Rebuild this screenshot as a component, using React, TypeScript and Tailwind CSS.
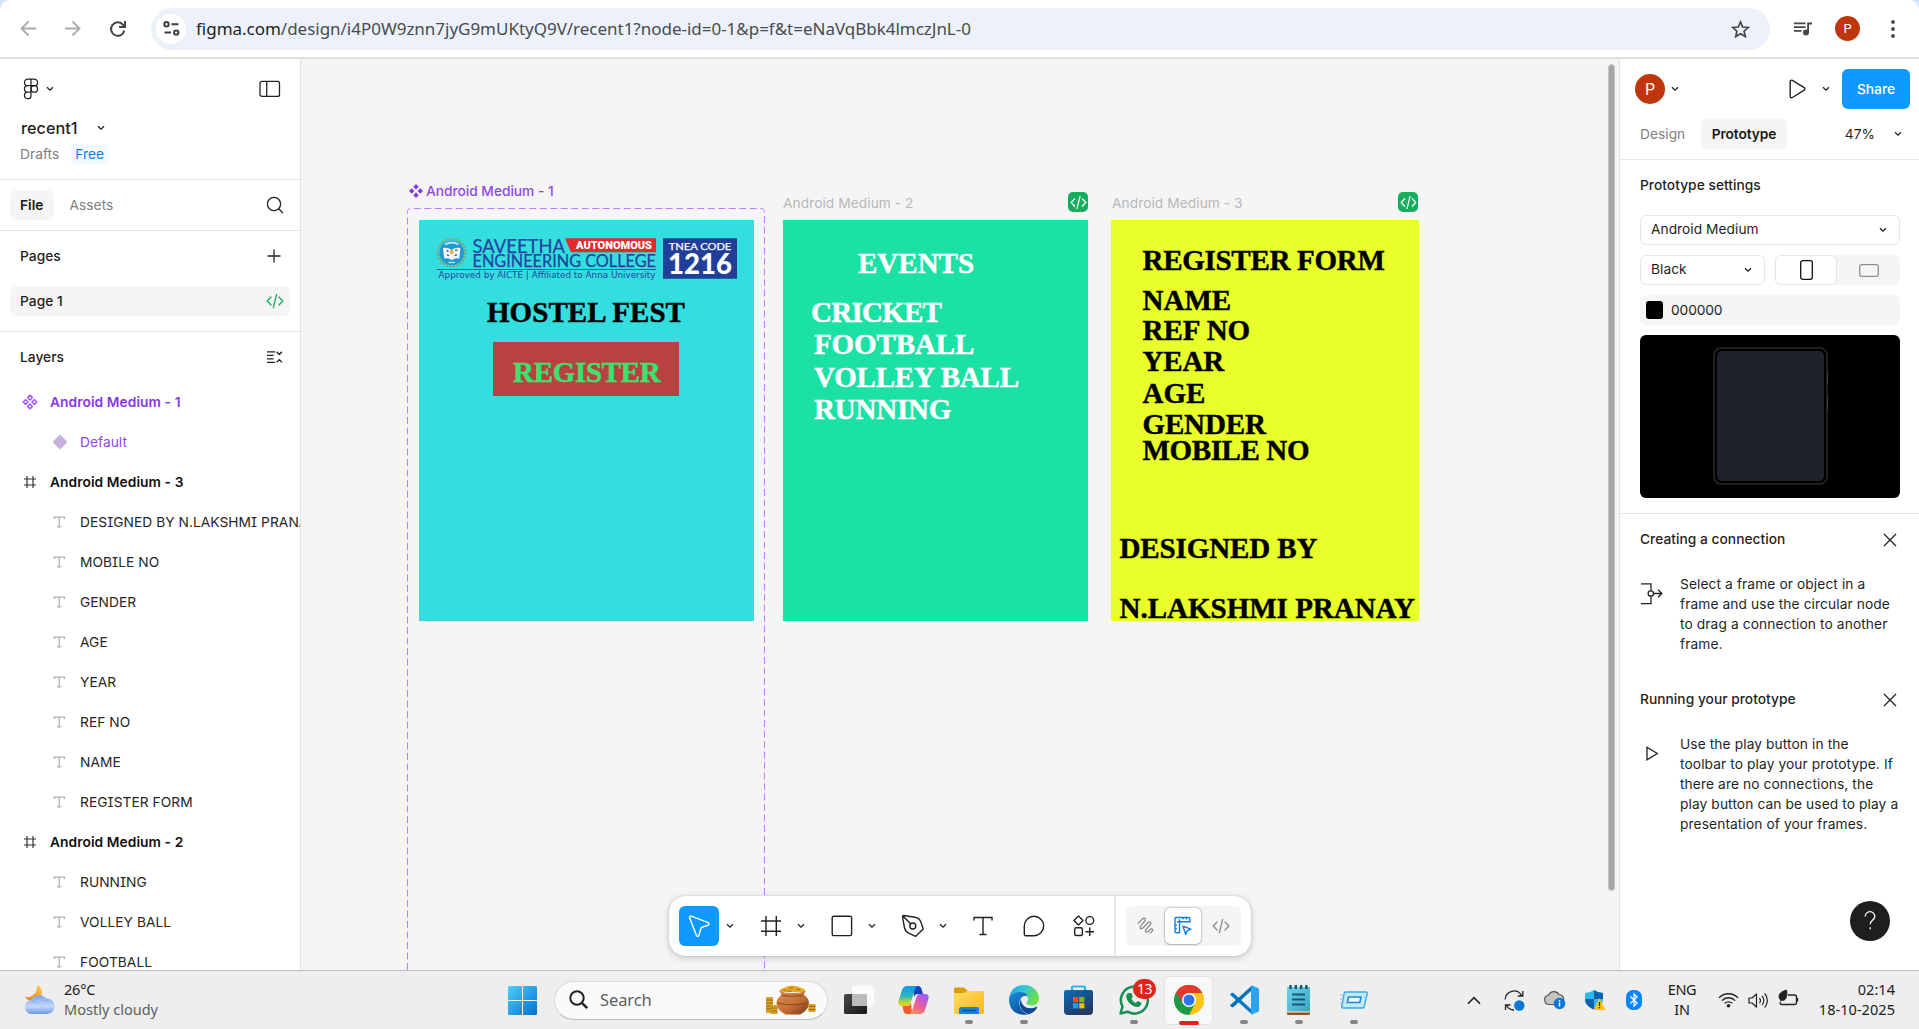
import React from "react";

type SvgProps = React.SVGProps<SVGSVGElement>;

function Chevron({ className = "" }: { className?: string }) {
  return (
    <svg className={`shrink-0 ${className}`} width="8" height="6" viewBox="0 0 8 6" fill="none" stroke="currentColor" strokeWidth="1.3">
      <path d="M1 1.2 4 4.2 7 1.2" />
    </svg>
  );
}

function CodeGlyph(props: SvgProps) {
  return (
    <svg viewBox="0 0 18 16" fill="none" stroke="currentColor" strokeWidth="1.3" strokeLinecap="round" strokeLinejoin="round" {...props}>
      <path d="M5 4 1.2 8 5 12M13 4l3.8 4L13 12M10.6 1.5 7.4 14.5" />
    </svg>
  );
}

/* ---------- browser bar ---------- */

function BrowserBar() {
  return (
    <div className="h-[59px] shrink-0 bg-[#d3e3fd]">
      <div className="flex h-full items-center rounded-t-[10px] border-b-2 border-[#e0e1e1] bg-white">
        <div className="flex w-[151px] shrink-0 items-center pl-5 text-[#a9abad]">
          <svg width="17" height="17" viewBox="0 0 17 17" fill="none" stroke="currentColor" strokeWidth="1.8">
            <path d="M16 8.5H2M8.5 1.5l-7 7 7 7" />
          </svg>
          <svg className="ml-[27px]" width="17" height="17" viewBox="0 0 17 17" fill="none" stroke="currentColor" strokeWidth="1.8">
            <path d="M1 8.500H15M8.500 1.500l7 7-7 7" />
          </svg>
          <svg className="ml-[28px] text-[#444746]" width="18" height="18" viewBox="0 0 18 18" fill="none" stroke="currentColor" strokeWidth="2">
            <path d="M15.300 10.500a6.700 6.700 0 1 1-1.600-6L16 6.700" />
            <path d="M16 1v6h-6" />
          </svg>
        </div>
        <div className="flex h-[42px] w-[1619px] shrink-0 items-center rounded-full bg-[#edf1fa] pl-[5px]">
          <div className="flex h-[30px] w-[30px] items-center justify-center rounded-full bg-white">
            <svg width="17" height="15" viewBox="0 0 17 15" fill="none" stroke="#3c4043" strokeWidth="2">
              <circle cx="3.500" cy="3.200" r="2.200" />
              <path d="M8.500 3.200H15.500M1.500 11.600H8" />
              <circle cx="13.200" cy="11.600" r="2.200" />
            </svg>
          </div>
          <div className="ml-[10px] flex-1 whitespace-nowrap pt-px font-['Noto_Sans',sans-serif] text-[17px] leading-[22px] tracking-[-0.02px] text-[#474b50]">
            <span className="text-[#1f2023]">figma.com</span>/design/i4P0W9znn7jyG9mUKtyQ9V/recent1?node-id=0-1&amp;p=f&amp;t=eNaVqBbk4lmczJnL-0
          </div>
          <svg className="mr-5" width="19" height="18" viewBox="0 0 19 18" fill="none" stroke="#444746" strokeWidth="1.7">
            <path d="m9.500 1.900 2.250 5.100 5.500.5-4.150 3.700 1.200 5.400-4.800-2.850-4.800 2.850 1.200-5.400L1.750 7.500l5.500-.5z" />
          </svg>
        </div>
        <div className="flex items-center pl-[23px]">
          <svg width="20" height="16" viewBox="0 0 20 16" fill="#444746">
            <path d="M1 1.500h11.500v1.700H1zM1 5.300h11.500V7H1zM1 9.100h7.500v1.700H1zM14.200 1.500H19v2.100h-3v8h-1.800z" />
            <circle cx="13" cy="11.600" r="3" />
          </svg>
          <div className="ml-[22px] flex h-[25px] w-[25px] items-center justify-center rounded-full bg-[#bf360c] font-[Roboto,sans-serif] text-[13px] text-white">P</div>
          <svg className="ml-[31px]" width="4" height="18" viewBox="0 0 4 18" fill="#444746">
            <circle cx="2" cy="2" r="1.900" /><circle cx="2" cy="9" r="1.900" /><circle cx="2" cy="16" r="1.900" />
          </svg>
        </div>
      </div>
    </div>
  );
}

/* ---------- left sidebar ---------- */

function TextIcon() {
  return (
    <svg className="shrink-0" width="13" height="12" viewBox="0 0 13 12" fill="none" stroke="#b0b0b0" strokeWidth="1.200">
      <path d="M1.100 3V1.100h10.300V3M6.250 1.100v9.800M4.100 10.900h4.300" />
    </svg>
  );
}

function HashIcon() {
  return (
    <svg width="14" height="14" viewBox="0 0 14 14" fill="none" stroke="#333" strokeWidth="1.200">
      <path d="M4 1v12M10 1v12M1 4h12M1 10h12" />
    </svg>
  );
}

const layers: { kind: "set" | "variant" | "frame" | "text"; name: string }[] = [
  { kind: "set", name: "Android Medium - 1" },
  { kind: "variant", name: "Default" },
  { kind: "frame", name: "Android Medium - 3" },
  { kind: "text", name: "DESIGNED BY N.LAKSHMI PRANAY" },
  { kind: "text", name: "MOBILE NO" },
  { kind: "text", name: "GENDER" },
  { kind: "text", name: "AGE" },
  { kind: "text", name: "YEAR" },
  { kind: "text", name: "REF NO" },
  { kind: "text", name: "NAME" },
  { kind: "text", name: "REGISTER FORM" },
  { kind: "frame", name: "Android Medium - 2" },
  { kind: "text", name: "RUNNING" },
  { kind: "text", name: "VOLLEY BALL" },
  { kind: "text", name: "FOOTBALL" },
];

function LayerRow({ kind, name }: { kind: string; name: string }) {
  if (kind === "set")
    return (
      <div className="flex h-10 shrink-0 items-center pl-[22px] font-semibold tracking-[0.08px] text-[#8638e5]">
        <svg width="16" height="16" viewBox="0 0 16 16" fill="none" stroke="#9747ff" strokeWidth="1.300">
          <path d="M8 1.200 10.400 3.600 8 6 5.600 3.600zM8 10l2.400 2.400L8 14.800l-2.400-2.400zM3.600 5.600 6 8l-2.400 2.400L1.200 8zM12.400 5.600 14.800 8l-2.400 2.400L10 8z" />
        </svg>
        <span className="ml-3">{name}</span>
      </div>
    );
  if (kind === "variant")
    return (
      <div className="flex h-10 shrink-0 items-center pl-[52px] text-[#8f47e8]">
        <svg width="16" height="16" viewBox="0 0 16 16">
          <path d="M8 1 15 8 8 15 1 8z" fill="#c5b0df" stroke="#c5b0df" strokeLinejoin="round" />
        </svg>
        <span className="ml-3">{name}</span>
      </div>
    );
  if (kind === "frame")
    return (
      <div className="flex h-10 shrink-0 items-center pl-[23px] font-semibold tracking-[0.08px] text-[#111]">
        <HashIcon />
        <span className="ml-[13px]">{name}</span>
      </div>
    );
  return (
    <div className="flex h-10 shrink-0 items-center whitespace-nowrap pl-[53px] text-[#262626]">
      <TextIcon />
      <span className="ml-[14px] tracking-[0.05px] [font-feature-settings:'cv08']">{name}</span>
    </div>
  );
}

function LeftPanel() {
  return (
    <aside className="flex w-[301px] shrink-0 flex-col overflow-hidden border-r border-[#e2e2e2] bg-white text-[13.750px] tracking-[0.03px] text-[#1f1f1f]">
      <div className="h-[121px] shrink-0 border-b border-[#e6e6e6]">
        <div className="flex items-center pl-[23px] pr-[19px] pt-[19px]">
          <svg width="16" height="22" viewBox="0 0 16 22" fill="none" stroke="#222" strokeWidth="1.250">
            <path d="M8 1.200H4.700a3.250 3.250 0 0 0 0 6.500H8zM8 1.200h3.300a3.250 3.250 0 0 1 0 6.500H8zM8 7.700H4.700a3.250 3.250 0 0 0 0 6.500H8zM8 14.200H4.700A3.250 3.250 0 1 0 8 17.400z" />
            <circle cx="11.300" cy="10.950" r="3.250" />
          </svg>
          <Chevron className="ml-[7px]" />
          <svg className="ml-auto" width="22" height="18" viewBox="0 0 22 18" fill="none" stroke="#222" strokeWidth="1.300">
            <rect x="1" y="1.400" width="19.500" height="15" rx="2" />
            <path d="M7.700 1.400v15" />
          </svg>
        </div>
        <div className="mt-[17px] flex h-[22px] items-center pl-[21px] text-[16.250px] font-medium tracking-[0.02px]">
          recent1
          <Chevron className="ml-[19px]" />
        </div>
        <div className="mt-[5px] flex h-5 items-center pl-5 text-[#808080]">
          Drafts
          <span className="ml-[11px] flex h-5 items-center rounded-[5px] bg-[#f2f9ff] px-[5px] text-[#0b7fe6]">Free</span>
        </div>
      </div>
      <div className="flex h-[51px] shrink-0 items-center border-b border-[#e6e6e6] pl-[10px] pr-4 text-[#808080]">
        <span className="flex h-[30px] items-center rounded-[6px] bg-[#f5f5f5] px-[10px] font-semibold text-[#1a1a1a]">File</span>
        <span className="ml-4">Assets</span>
        <svg className="ml-auto" width="18" height="18" viewBox="0 0 18 18" fill="none" stroke="#222" strokeWidth="1.300">
          <circle cx="8" cy="8" r="6.600" />
          <path d="m12.700 12.700 4.300 4.300" />
        </svg>
      </div>
      <div className="h-[101px] shrink-0 border-b border-[#e6e6e6]">
        <div className="flex h-[55px] items-center pb-[5px] pl-5 pr-[19px] font-medium">
          Pages
          <svg className="ml-auto" width="14" height="14" viewBox="0 0 14 14" stroke="#222" strokeWidth="1.300">
            <path d="M7 .5v13M.5 7h13" />
          </svg>
        </div>
        <div className="mx-[10px] flex h-[30px] items-center rounded-[6px] bg-[#f5f5f5] pl-[10px] pr-[6px] font-medium">
          Page 1
          <CodeGlyph className="ml-auto text-[#14ae5c]" width="18" height="16" />
        </div>
      </div>
      <div className="flex h-[50px] shrink-0 items-center pl-5 pr-[17px] font-medium">
        Layers
        <svg className="ml-auto" width="17" height="14" viewBox="0 0 17 14" fill="none" stroke="#222" strokeWidth="1.300">
          <path d="M1 1.800h8M1 5.300h6.500M1 8.800h6.500M1 12.400h8M10.500 1.800 13.300 4.500 16 1.800M10.500 12.400l2.800-2.700 2.700 2.700" />
        </svg>
      </div>
      <div className="flex min-h-0 flex-1 flex-col overflow-hidden">
        {layers.map((l) => (
          <LayerRow key={l.name} kind={l.kind} name={l.name} />
        ))}
      </div>
    </aside>
  );
}

/* ---------- canvas ---------- */

function Item({ at, children }: { at: string; children: React.ReactNode }) {
  return (
    <div className={`absolute whitespace-nowrap font-['Liberation_Serif',serif] text-[29px] font-bold leading-[29px] [-webkit-text-stroke:0.45px_currentColor] ${at}`}>
      {children}
    </div>
  );
}

function ReadyBadge({ at }: { at: string }) {
  return (
    <div className={`absolute flex h-5 w-5 items-center justify-center rounded-[5px] bg-[#14ae5c] text-white ${at}`}>
      <CodeGlyph width="17" height="15" />
    </div>
  );
}

function CollegeLogo() {
  return (
    <svg className="absolute left-[17px] top-[17px]" width="303" height="46" viewBox="0 0 303 46">
      <circle cx="15.700" cy="15.700" r="13.600" fill="none" stroke="#7fa77d" strokeWidth="2.600" strokeDasharray="2.200 1.360" />
      <circle cx="15.700" cy="15.700" r="12.300" fill="#1e9bd7" />
      <path d="M9 7.500q6.700-4 13.400 0" stroke="#bfe6f7" strokeWidth="2" fill="none" />
      <path d="M7 11q5-1 8.700 2 3.700-3 8.700-2l-1.200 10.500q-4.500-.8-7.500 1.500-3-2.300-7.500-1.500z" fill="#f3f7f5" />
      <circle cx="15.700" cy="15" r="1.900" fill="#e9a33b" />
      <path d="M10.500 13.500l2 1M19 13.500l2.500-.5M11 18l2.200.5M18.500 18.500l2.500-.5" stroke="#5a60b0" strokeWidth="1.500" />
      <path d="M12.500 25.500h6.400" stroke="#bfe6f7" strokeWidth="1.300" />
      <g fontFamily="Lato, sans-serif" fill="#1f459f">
        <text x="36.500" y="15.700" fontSize="19.800" textLength="92.500" lengthAdjust="spacingAndGlyphs" stroke="#1f459f" strokeWidth=".25">SAVEETHA</text>
        <text x="36.500" y="29.900" fontSize="16.800" textLength="183.500" lengthAdjust="spacingAndGlyphs" stroke="#1f459f" strokeWidth=".25">ENGINEERING COLLEGE</text>
      </g>
      <path d="M1 32.500h219" stroke="#1f459f" />
      <text x="2.500" y="41.300" fontFamily="'DejaVu Sans', sans-serif" fontSize="8" fill="#1f459f" textLength="217" lengthAdjust="spacingAndGlyphs">Approved by AICTE | Affiliated to Anna University</text>
      <path d="M129 1.300h91v14h-85z" fill="#e32b2d" />
      <text x="140" y="12" fontFamily="Roboto, sans-serif" fontWeight="900" fontSize="10.800" fill="#fff" textLength="76" lengthAdjust="spacingAndGlyphs">AUTONOMOUS</text>
      <path d="M227 1.300h74v40.500h-74z" fill="#213f99" />
      <g fill="#fff" fontFamily="Lato, sans-serif">
        <text x="232.800" y="12.500" fontSize="10" textLength="62.500" lengthAdjust="spacingAndGlyphs" stroke="#fff" strokeWidth=".25">TNEA CODE</text>
        <text x="232" y="37.200" fontSize="28.500" fontWeight="900" textLength="64" lengthAdjust="spacingAndGlyphs">1216</text>
      </g>
    </svg>
  );
}

function Toolbar() {
  return (
    <div className="absolute left-[368px] top-[837px] flex h-[60px] w-[582px] items-center rounded-[16px] bg-white pl-[10px] text-[#222] shadow-[0_0_1px_rgba(0,0,0,0.35),0_2px_7px_rgba(0,0,0,0.2)]">
      <div className="flex h-10 w-10 items-center justify-center rounded-[6px] bg-[#0d99ff]">
        <svg width="24" height="24" viewBox="0 0 24 24" fill="none" stroke="#fff" strokeWidth="1.400" strokeLinejoin="round">
          <path d="M2.600 3.700c-.4-1 .6-2 1.600-1.600l17 6.600c1.100.4 1.100 1.900.1 2.300l-6.500 2.300c-.3.100-.6.400-.7.700l-2.300 7.400c-.4 1.100-1.900 1.100-2.300.1z" />
        </svg>
      </div>
      <Chevron className="ml-[7px]" />
      <svg className="ml-[26px]" width="22" height="22" viewBox="0 0 22 22" fill="none" stroke="currentColor" strokeWidth="1.400">
        <path d="M6 1v20M16.300 1v20M1 6h20M1 16.300h20" />
      </svg>
      <Chevron className="ml-[15px]" />
      <svg className="ml-[26px]" width="22" height="22" viewBox="0 0 22 22" fill="none" stroke="currentColor" strokeWidth="1.400">
        <rect x="1.200" y="1.200" width="19.400" height="19.400" rx="1.500" />
      </svg>
      <Chevron className="ml-[15px]" />
      <svg className="ml-[25px]" width="24" height="24" viewBox="0 0 24 24" fill="none" stroke="currentColor" strokeWidth="1.400" strokeLinejoin="round">
        <path d="M1.500 2.800c0-.9.600-1.400 1.400-1.300L14 3.200c3.200.6 5 2.200 6 5l2.200 6.800-7.500 7.300-6.600-3c-2.600-1-3.900-2.800-4.600-5.500zM2 2l7.500 7.800" />
        <circle cx="11.800" cy="12" r="3" />
      </svg>
      <Chevron className="ml-[14px]" />
      <svg className="ml-[26px]" width="20" height="20" viewBox="0 0 20 20" fill="none" stroke="currentColor" strokeWidth="1.400">
        <path d="M1 4.500V1.500h18v3M10 1.500v17M6.500 18.500h7" />
      </svg>
      <svg className="ml-[30px]" width="22" height="22" viewBox="0 0 22 22" fill="none" stroke="currentColor" strokeWidth="1.400">
        <path d="M1.300 19.200V11A9.700 9.700 0 1 1 11 20.700H2.800a1.500 1.500 0 0 1-1.500-1.500z" />
      </svg>
      <svg className="ml-[28px]" width="22" height="22" viewBox="0 0 22 22" fill="none" stroke="currentColor" strokeWidth="1.400" strokeLinejoin="round">
        <path d="M5.500 1 10 5.500 5.500 10 1 5.500zM16.800 12.500v8.500M12.500 16.800H21" />
        <circle cx="16.800" cy="5.500" r="3.900" />
        <rect x="1.700" y="12.800" width="7.700" height="7.700" rx="1.500" />
      </svg>
      <div className="ml-[19px] h-full w-[2px] bg-[#e6e6e6]" />
      <div className="ml-[10px] flex h-10 w-[115px] items-center rounded-[6px] bg-[#f5f5f5] text-[#8a8a8a]">
        <svg className="ml-[11px]" width="18" height="18" viewBox="0 0 17 17" fill="none" stroke="currentColor" strokeWidth="1.200" strokeLinecap="round" strokeLinejoin="round">
          <path d="M1 6 5 2q2-1.500 2.800-.3.500 1-1 2.800L3.800 8.200q-1.500 2-.3 2.700 1 .6 2.500-1l4.300-4.500q1.700-1.500 2.600-.4.800 1-.8 2.800L8.700 11.400q-1.400 2-.3 2.600 1 .6 2.300-.6l1.300-1.300q1.600-1.500 2.500-.6.900.9-.4 2.200l-1.400 1.500" />
        </svg>
        <div className="ml-[10px] flex h-[36px] w-[36px] items-center justify-center rounded-[5px] bg-white shadow-[0_0_2px_rgba(0,0,0,0.5),0_1px_2px_rgba(0,0,0,0.15)]">
          <svg width="18" height="20" viewBox="0 0 18 20" fill="none" stroke="#0b7fe6" strokeWidth="1.400" strokeLinejoin="round">
            <path d="M2.200 1.500h12.600A1.200 1.200 0 0 1 16 2.700v3H5.500v11H2.200A1.200 1.200 0 0 1 1 15.500V2.700a1.200 1.200 0 0 1 1.200-1.200zM5.500 5.700H3M5.500 3.200v2.500M9 1.700v1.800M12.500 1.700v1.800M1.200 9h1.800M1.200 12.500h1.800M9 10.200l7.800 3-3.700 1.600-1.400 3.800z" />
          </svg>
        </div>
        <CodeGlyph className="ml-[11px]" width="18" height="18" />
      </div>
    </div>
  );
}

function Canvas() {
  return (
    <main className="relative h-full flex-1 overflow-hidden bg-[#f5f5f5]">
      <svg className="absolute left-[106px] top-[149px]" width="359" height="762" viewBox="0 0 359 762" fill="none">
        <path d="M.5 762V3.500q0-3 3-3h351q3 0 3 3v758.500" stroke="#b980fb" strokeWidth="1" strokeDasharray="7 3.500" />
      </svg>
      <div className="absolute left-[108px] top-[123px] flex items-center text-[13.750px] leading-[18px] text-[#9049e8]">
        <svg width="14" height="14" viewBox="0 0 14 14" fill="#8638e5">
          <path d="M7 0 9.700 2.700 7 5.400 4.300 2.700zM7 8.600l2.700 2.700L7 14l-2.700-2.700zM2.700 4.300 5.400 7 2.700 9.700 0 7zM11.300 4.300 14 7l-2.700 2.700L8.600 7z" />
        </svg>
        <span className="ml-[3px] font-medium tracking-[-0.02px]">Android Medium - 1</span>
      </div>
      <div className="absolute left-[482px] top-[135px] text-[13.750px] leading-[18px] tracking-[0.05px] text-[#b8b8b8]">Android Medium - 2</div>
      <div className="absolute left-[811px] top-[135px] text-[13.750px] leading-[18px] tracking-[0.05px] text-[#b8b8b8]">Android Medium - 3</div>
      <ReadyBadge at="left-[767px] top-[133px]" />
      <ReadyBadge at="left-[1097px] top-[133px]" />

      <div className="absolute left-[118px] top-[161px] h-[401px] w-[334.500px] bg-[#34dede] text-black">
        <CollegeLogo />
        <Item at="left-[68px] top-[78px] tracking-[0.05px]">HOSTEL FEST</Item>
        <div className="absolute left-[74px] top-[122px] h-[54px] w-[186px] bg-[#b94141]" />
        <Item at="left-[94px] top-[138px] tracking-[-0.3px] text-[#3be26d]">REGISTER</Item>
      </div>

      <div className="absolute left-[482px] top-[161px] h-[401px] w-[305px] bg-[#1be1a5] text-white">
        <Item at="left-[75px] top-[29px]">EVENTS</Item>
        <Item at="left-[28px] top-[78px] tracking-[-0.75px]">CRICKET</Item>
        <Item at="left-[31px] top-[110px] tracking-[-0.1px]">FOOTBALL</Item>
        <Item at="left-[31px] top-[143px] tracking-[-0.2px]">VOLLEY BALL</Item>
        <Item at="left-[31px] top-[175px] tracking-[-0.2px]">RUNNING</Item>
      </div>

      <div className="absolute left-[810px] top-[161px] h-[401px] w-[308px] bg-[#e9ff29] text-black">
        <Item at="left-[31.500px] top-[26px] tracking-[-0.28px]">REGISTER FORM</Item>
        <Item at="left-[31.500px] top-[66px]">NAME</Item>
        <Item at="left-[31.500px] top-[96px]">REF NO</Item>
        <Item at="left-[31.500px] top-[127px] tracking-[-0.2px]">YEAR</Item>
        <Item at="left-[31.500px] top-[159px]">AGE</Item>
        <Item at="left-[31.500px] top-[190px] tracking-[-0.15px]">GENDER</Item>
        <Item at="left-[31.500px] top-[216px] tracking-[-0.38px]">MOBILE NO</Item>
        <Item at="left-[8.500px] top-[314px] tracking-[-0.1px]">DESIGNED BY</Item>
        <Item at="left-[8.500px] top-[374px]">N.LAKSHMI PRANAY</Item>
      </div>

      <div className="absolute right-[4px] top-[5px] h-[827px] w-[7px] rounded-full border border-[#c4c4c4] bg-[#a6a6a6]" />
      <Toolbar />
    </main>
  );
}

/* ---------- right panel ---------- */

function CloseIcon() {
  return (
    <svg className="ml-auto" width="14" height="14" viewBox="0 0 14 14" stroke="#222" strokeWidth="1.300">
      <path d="M1 1l12 12M13 1 1 13" />
    </svg>
  );
}

function RightPanel() {
  return (
    <aside className="relative flex w-[300px] shrink-0 flex-col border-l border-[#e2e2e2] bg-white text-[13.750px] tracking-[0.03px] text-[#1f1f1f]">
      <div className="h-[101px] shrink-0 border-b border-[#e6e6e6]">
        <div className="flex items-center pl-[15px] pr-[9px] pt-[10px]">
          <div className="flex h-[30px] w-[30px] items-center justify-center rounded-full bg-[#bf360c] text-[16px] text-white">P</div>
          <Chevron className="ml-[6px]" />
          <svg className="ml-auto" width="17" height="20" viewBox="0 0 17 20" fill="none" stroke="#222" strokeWidth="1.400">
            <path d="M1.200 2.600c0-1.200 1.200-1.800 2.200-1.200l11.800 7.300c.9.600.9 1.900 0 2.500L3.400 18.500c-1 .6-2.200 0-2.200-1.200z" />
          </svg>
          <Chevron className="ml-[16px] mr-[12px]" />
          <div className="flex h-10 w-[68px] items-center justify-center rounded-[6px] bg-[#0d99ff] font-medium text-white">Share</div>
        </div>
        <div className="mt-[10px] flex h-[30px] items-center pl-5 pr-[17px] text-[#808080]">
          <span className="w-[46px]">Design</span>
          <span className="ml-[15px] flex h-[30px] w-[86px] items-center justify-center rounded-[6px] bg-[#f5f5f5] font-semibold tracking-[-0.1px] text-[#1a1a1a]">Prototype</span>
          <span className="ml-auto text-[#1f1f1f]">47%</span>
          <Chevron className="ml-[19px] text-[#222]" />
        </div>
      </div>
      <div className="flex h-[354px] shrink-0 flex-col border-b border-[#e6e6e6] pl-5 pr-[19px]">
        <div className="flex h-[55px] items-end pb-[20px] font-medium leading-[20px]">Prototype settings</div>
        <div className="flex h-[30px] items-center rounded-[6px] border border-[#e6e6e6] pb-px pl-[10px] pr-3">
          Android Medium
          <Chevron className="ml-auto" />
        </div>
        <div className="mt-[10px] flex gap-[10px]">
          <div className="flex h-[30px] w-[125px] items-center rounded-[6px] border border-[#e6e6e6] pb-px pl-[10px] pr-3">
            Black
            <Chevron className="ml-auto" />
          </div>
          <div className="flex h-[30px] w-[125px] rounded-[6px] bg-[#f5f5f5]">
            <div className="flex w-[62px] items-center justify-center rounded-[6px] border border-[#e6e6e6] bg-white">
              <svg width="13" height="20" viewBox="0 0 13 20" fill="none" stroke="#111" strokeWidth="1.300">
                <rect x=".7" y=".7" width="11.600" height="18.600" rx="2" />
              </svg>
            </div>
            <div className="flex flex-1 items-center justify-center">
              <svg width="20" height="13" viewBox="0 0 20 13" fill="none" stroke="#8f8f8f" strokeWidth="1.300">
                <rect x=".7" y=".7" width="18.600" height="11.600" rx="2" />
              </svg>
            </div>
          </div>
        </div>
        <div className="mt-[10px] flex h-[30px] items-center rounded-[6px] bg-[#f5f5f5] pl-[6px]">
          <div className="h-[18px] w-[17px] rounded-[3px] bg-black" />
          <span className="ml-2 tracking-[-0.1px]">000000</span>
        </div>
        <div className="mt-[10px] flex h-[163px] items-center justify-center rounded-[6px] bg-black">
          <div className="relative mb-px h-[138px] w-[115px] rounded-[8px] border-2 border-[#202020] bg-black p-[2px]">
            <div className="h-full w-full rounded-[5px] bg-[#1e2229]" />
            <div className="absolute -right-[2px] top-[22px] h-3 w-px bg-[#3a3a3a]" />
            <div className="absolute -right-[2px] top-[45px] h-[18px] w-px bg-[#3a3a3a]" />
          </div>
        </div>
      </div>
      <div className="flex h-[51px] shrink-0 items-center pl-5 pr-[22px] font-medium">
        Creating a connection
        <CloseIcon />
      </div>
      <div className="flex h-[109px] shrink-0 pl-5 pt-[9px]">
        <svg className="mt-[9px] shrink-0" width="24" height="22" viewBox="0 0 24 22" fill="none" stroke="#222" strokeWidth="1.300">
          <path d="M1 .8h10v7M11 13.200v7.500H1M13.600 10.500h8M18 6.700l3.900 3.800L18 14.300" />
          <circle cx="10.800" cy="10.500" r="2.700" />
        </svg>
        <p className="ml-4 whitespace-nowrap leading-[20px] tracking-[0.1px]">
          Select a frame or object in a<br />frame and use the circular node<br />to drag a connection to another<br />frame.
        </p>
      </div>
      <div className="flex h-[51px] shrink-0 items-center pl-5 pr-[22px] font-medium">
        Running your prototype
        <CloseIcon />
      </div>
      <div className="flex pl-[26px] pt-[9px]">
        <svg className="mt-[12px] shrink-0" width="13" height="15" viewBox="0 0 13 15" fill="none" stroke="#222" strokeWidth="1.300">
          <path d="M1 1.200 11.300 7.500 1 13.800z" />
        </svg>
        <p className="ml-[21px] whitespace-nowrap leading-[20px] tracking-[0.1px]">
          Use the play button in the<br />toolbar to play your prototype. If<br />there are no connections, the<br />play button can be used to play a<br />presentation of your frames.
        </p>
      </div>
      <div className="absolute bottom-[29px] right-[29px] flex h-10 w-10 items-center justify-center rounded-full bg-[#1e1e1e]">
        <svg width="12" height="20" viewBox="0 0 12 20" fill="none" stroke="#fff" strokeWidth="1.300">
          <path d="M1.200 5.500A4.800 4.800 0 0 1 10.800 5.500C10.800 9 6.200 9.300 6.200 13.300M6.200 16.300v1.900" />
        </svg>
      </div>
    </aside>
  );
}

/* ---------- taskbar ---------- */

function AppSlot({ children, open = false }: { children: React.ReactNode; open?: boolean }) {
  return (
    <div className="relative flex h-[58px] w-[55px] shrink-0 items-center justify-center">
      {children}
      {open && <div className="absolute bottom-[5px] h-1 w-2 rounded-full bg-[#868686]" />}
    </div>
  );
}

function Taskbar() {
  return (
    <footer className="flex h-[59px] shrink-0 items-center border-t border-[#bcbcbc] bg-[#eeeeee] font-['Noto_Sans',sans-serif] text-[14.500px] text-[#1b1b1b]">
      <div className="flex w-[495px] shrink-0 items-center pl-6">
        <svg width="32" height="32" viewBox="0 0 32 32">
          <defs>
            <linearGradient id="moon" x1="1" y1="0" x2="0" y2="1"><stop stopColor="#fbc94a" /><stop offset="1" stopColor="#ee7d13" /></linearGradient>
            <linearGradient id="cloud" x1="0" y1="0" x2="0" y2="1"><stop stopColor="#7ea5ec" /><stop offset=".6" stopColor="#c3d7f8" /><stop offset="1" stopColor="#6f9ae8" /></linearGradient>
          </defs>
          <path d="M13 1c7 3 6 12 1 15-5 2.500-11 1-13-3 6 1 13-3 12-12z" fill="url(#moon)" />
          <path d="M8 30a7 7 0 0 1-.5-14A8.500 8.500 0 0 1 22 14.500 7.800 7.800 0 0 1 24 30z" fill="url(#cloud)" />
          <path d="M20 17.500q2.500-2 5-1.500M8 17q3-.5 5 2" stroke="#86abed" fill="none" />
        </svg>
        <div className="mb-[2px] ml-2 leading-[20px]">
          <div className="tracking-[-0.2px]">26°C</div>
          <div className="tracking-[0.02px] text-[#5d5d5d]">Mostly cloudy</div>
        </div>
      </div>

      <AppSlot>
        <svg width="29" height="29" viewBox="0 0 29 29">
          <defs><linearGradient id="win" x1="0" y1="0" x2="1" y2="1"><stop stopColor="#4cd0fb" /><stop offset="1" stopColor="#0270cf" /></linearGradient></defs>
          <path d="M1.500 0H14v14H0V1.500A1.500 1.500 0 0 1 1.500 0zM15 0h12.500A1.500 1.500 0 0 1 29 1.500V14H15zM0 15h14v14H1.500A1.500 1.500 0 0 1 0 27.500zM15 15h14v12.500a1.500 1.500 0 0 1-1.500 1.500H15z" fill="url(#win)" />
        </svg>
      </AppSlot>
      <div className="ml-[4px] mr-[3px] flex h-[39px] w-[274px] shrink-0 items-center rounded-full border border-[#d9d9d9] border-b-[#bdbdbd] bg-[#fafafa] pl-[14px] text-[16.500px] text-[#5e5e5e]">
        <svg width="20" height="20" viewBox="0 0 20 20" fill="none" stroke="#222" strokeWidth="2">
          <circle cx="8" cy="8" r="6.700" />
          <path d="m12.800 12.800 5.400 5.400" strokeWidth="2.500" />
        </svg>
        <span className="ml-[11px] tracking-[-0.1px]">Search</span>
        <svg className="ml-auto mr-[8px]" width="54" height="30" viewBox="0 0 54 30">
          <defs><linearGradient id="pot" x1="0" y1="0" x2="1" y2="1"><stop stopColor="#d98a4a" /><stop offset=".5" stopColor="#c9733a" /><stop offset="1" stopColor="#7c3512" /></linearGradient></defs>
          <path d="M14 7q1-3.500 5-4 3-2.500 8-2.500T36 3q4 .500 5 4z" fill="#e3a925" />
          <path d="M18 5h3M24 3h4M31 4.500h4M22 6h5" stroke="#a86d0d" strokeWidth="1.200" />
          <path d="M15 6.500q12.500 3 25 0l-1 3.500q5 3.500 5 8 0 7-9 11.500H20.500q-9-4.500-9-11.500 0-4.500 5-8z" fill="url(#pot)" />
          <path d="M16.500 10.300q11 2 22 0M12 18q15.500 3.500 31 0" stroke="#8c451d" fill="none" />
          <path d="M1 12h7v16H1zM5.500 20h7v9h-7zM43.500 19h7v8h-7z" fill="#d9a12a" />
          <path d="M1 15h7M1 18h7M1 21h4.500M1 24h4.500M5.500 23h7M5.500 26h7M43.500 21.500h7M43.500 24.500h7" stroke="#9d6a0b" />
        </svg>
      </div>
      <AppSlot>
        <svg width="30" height="28" viewBox="0 0 30 28">
          <defs><linearGradient id="tv" x1="0" y1="0" x2="1" y2="1"><stop stopColor="#4a4a4a" /><stop offset="1" stopColor="#161616" /></linearGradient></defs>
          <rect y="8" width="23" height="20" rx="1.500" fill="url(#tv)" />
          <rect x="8" width="22" height="20" rx="1.500" fill="#fff" opacity=".75" />
          <path d="M8 8h15v12H8z" fill="#b3b3b3" opacity=".7" />
        </svg>
      </AppSlot>
      <AppSlot>
        <svg width="31" height="28" viewBox="0 0 31 28" fill="none">
          <defs>
            <linearGradient id="cpa" x1="0" y1="0" x2="0" y2="1"><stop stopColor="#1798ea" /><stop offset=".5" stopColor="#25b7c1" /><stop offset=".8" stopColor="#b6d33c" /><stop offset="1" stopColor="#f9cc1d" /></linearGradient>
            <linearGradient id="cpb" x1=".6" y1="0" x2="0" y2="1"><stop stopColor="#a45af0" /><stop offset=".5" stopColor="#ee5e96" /><stop offset="1" stopColor="#fb9a4b" /></linearGradient>
          </defs>
          <path d="M15 0h5q2.500 0 3.500 3l1.500 5h-5q-3 0-4 3z" fill="#1442bd" />
          <path d="M14 28H9q-2.500 0-3.500-3L4.500 20H9q3 0 4-3z" fill="#f0592f" />
          <path d="M9 0h11q-2 0-3 3l-4.500 14q-1 3-4 3H4Q-.5 20 .6 15L4 4Q5.500 0 9 0z" fill="url(#cpa)" />
          <path d="M22 28H11q2 0 3-3l4.500-14q1-3 4-3H27q4.500 0 3.400 5L27 24q-1.500 4-5 4z" fill="url(#cpb)" />
        </svg>
      </AppSlot>
      <AppSlot open>
        <svg width="30" height="27" viewBox="0 0 30 27">
          <defs><linearGradient id="fold" x1="0" y1="0" x2="1" y2="1"><stop stopColor="#ffdc62" /><stop offset="1" stopColor="#fbb917" /></linearGradient></defs>
          <path d="M0 2a1.500 1.500 0 0 1 1.500-1.500H10L14 4h14.500A1.500 1.500 0 0 1 30 5.500V10H0z" fill="#dd9a07" />
          <path d="M0 6h10l3-2h15.500A1.500 1.500 0 0 1 30 5.500v20a1.500 1.500 0 0 1-1.500 1.500h-27A1.500 1.500 0 0 1 0 25.500z" fill="url(#fold)" />
          <path d="M5 27v-5a2 2 0 0 1 2-2h16a2 2 0 0 1 2 2v5z" fill="#1583d8" />
          <path d="M8.500 23.500h13" stroke="#0a4e8c" strokeWidth="1.300" />
        </svg>
      </AppSlot>
      <AppSlot open>
        <svg width="30" height="30" viewBox="0 0 30 30">
          <defs>
            <linearGradient id="ea" x1="0" y1="0" x2="1" y2=".4"><stop stopColor="#1e9bea" /><stop offset=".5" stopColor="#35c6d6" /><stop offset="1" stopColor="#6be04b" /></linearGradient>
            <linearGradient id="eb" x1="0" y1="0" x2=".6" y2="1"><stop stopColor="#1c8fe0" /><stop offset="1" stopColor="#0d4f9d" /></linearGradient>
          </defs>
          <path d="M0 14C1 5 7 0 15 0c9 0 15 6.500 15 13 0 5-3.500 7.500-7.500 7.500-3.500 0-5-1.300-5-2.500s1.500-1.500 1.500-4c0-3-3-5.500-7-5.500C6 8.500 1.500 11.500 0 14z" fill="url(#ea)" />
          <path d="M0 15c0-5 6-8.500 11.500-8 4 .3 6.500 2 7 4-5-1-8.500 3-8 8 .4 5.500 4.500 10 9 10.200C8.500 32 0 25 0 15z" fill="url(#eb)" />
          <path d="M12 14c-3 5 0 14 8 15.200 4-1.200 7-4 8.300-7-.3-.8-1-.5-2 0C20 25 12 22 12 14z" fill="#0f4a99" />
        </svg>
      </AppSlot>
      <AppSlot>
        <svg width="29" height="30" viewBox="0 0 29 30">
          <defs><linearGradient id="st" x1="0" y1="0" x2=".6" y2="1"><stop stopColor="#0a6cb8" /><stop offset="1" stopColor="#243863" /></linearGradient></defs>
          <path d="M8 7V2.500a1 1 0 0 1 1-1h11a1 1 0 0 1 1 1V7" fill="none" stroke="#2bb5f2" strokeWidth="2.200" />
          <path d="M0 7a2 2 0 0 1 2-2h25a2 2 0 0 1 2 2v19a4 4 0 0 1-4 4H4a4 4 0 0 1-4-4z" fill="url(#st)" />
          <path d="M9 12h5.200v5.200H9z" fill="#f2502a" /><path d="M15.200 12h5.200v5.200h-5.200z" fill="#7fba14" />
          <path d="M9 18.200h5.200v5.200H9z" fill="#16a5ef" /><path d="M15.200 18.200h5.200v5.200h-5.200z" fill="#fdb813" />
        </svg>
      </AppSlot>
      <AppSlot open>
        <svg width="30" height="30" viewBox="0 0 30 30">
          <path d="M1.500 28.500 3.500 21.500A13.500 13.500 0 1 1 8.500 26.700z" fill="none" stroke="#1d8d55" strokeWidth="2.500" strokeLinejoin="round" />
          <path d="M10.200 8h1.500c.5 0 .8.300 1 .8l1 2.400c.2.500 0 1-.3 1.400l-1 1.200c1 2 2.400 3.200 4.500 4.200l1.200-1.400c.3-.4.800-.5 1.300-.3l2.400 1.200c.5.200.7.600.6 1.100-.3 2.400-2 3.600-4 3.500-5.500-.5-10.800-5.500-11.200-10.600C7.100 9.800 8.300 8 10.200 8z" fill="#1d8d55" />
        </svg>
        <div className="absolute left-[27px] top-[8px] flex h-5 w-[23px] items-center justify-center rounded-full bg-[#e2231a] text-[14px] leading-none tracking-[-0.5px] text-white">13</div>
      </AppSlot>
      <div className="relative mx-[3px] flex h-[49px] w-[49px] shrink-0 items-center justify-center rounded-[5px] border border-[#e3e3e3] bg-[#f8f8f8]">
        <svg width="30" height="30" viewBox="0 0 30 30">
          <path d="M15 15 2 7.500A15 15 0 0 1 28 7.500z" fill="#e0392d" />
          <path d="M15 15 28 7.500A15 15 0 0 1 15 30z" fill="#fcc419" />
          <path d="M15 15v0L21.100 18.500 15 30A15 15 0 0 1 2 7.500z" fill="#1f9a48" />
          <path d="M15 8h13.300a15 15 0 0 1 .2 14L21 18.500z" fill="#fcc419" />
          <path d="M2 7.500 8.900 18.500 15 8h13.300A15 15 0 0 0 2 7.500z" fill="#e0392d" />
          <circle cx="15" cy="15" r="7" fill="#fff" />
          <circle cx="15" cy="15" r="5.500" fill="#2a73e8" />
        </svg>
        <div className="absolute -bottom-px h-1 w-5 rounded-full bg-[#e2231a]" />
      </div>
      <AppSlot open>
        <svg width="30" height="30" viewBox="0 0 30 30">
          <path d="M.8 9.500 2.800 8q1-.7 2 .2L23 25v4.500z" fill="#0b7bc4" />
          <path d="M.8 20.500 2.800 22q1 .7 2-.2L23 5V.500z" fill="#0870b4" />
          <path d="M22 .3 29 3q1 .5 1 1.500v21q0 1-1 1.500l-7 2.700z" fill="#2aa5f3" />
        </svg>
      </AppSlot>
      <AppSlot open>
        <svg width="23" height="30" viewBox="0 0 23 30">
          <defs><linearGradient id="np" x1="0" y1="0" x2="1" y2="1"><stop stopColor="#6fd3e9" /><stop offset="1" stopColor="#39a5c2" /></linearGradient></defs>
          <path d="M0 26h23v2.500a1.500 1.500 0 0 1-1.500 1.500h-20A1.500 1.500 0 0 1 0 28.500z" fill="#9a4f12" />
          <path d="M0 2h23v25H0z" fill="url(#np)" />
          <path d="M0 26.500h23v1H0z" fill="#f3f3f3" />
          <path d="M5 9.500h13M5 14.500h13M5 19.500h13" stroke="#155872" strokeWidth="1.800" />
          <path d="M3.500 0v4M8.800 0v4M14.100 0v4M19.400 0v4" stroke="#155872" strokeWidth="2.400" />
        </svg>
      </AppSlot>
      <AppSlot open>
        <svg width="28" height="18" viewBox="0 0 28 18">
          <path d="M5.500 1h20.500q1.500 0 1.200 1.500l-3 13q-.3 1.500-1.700 1.500H3q-1.500 0-1.200-1.500l2.300-13Q4.300 1 5.500 1z" fill="#bfeafb" stroke="#3aa9dd" strokeWidth="1.400" />
          <path d="M8.500 6h12.500l-1.200 5.500H7.300z" fill="#e9f9ff" stroke="#2a86c6" strokeWidth="1.600" />
          <path d="M0 4h4M0 8h3M0 12h2.500" stroke="#7cc8ea" />
        </svg>
      </AppSlot>

      <div className="ml-auto flex items-center pr-6">
        <svg width="14" height="9" viewBox="0 0 14 9" fill="none" stroke="#222" strokeWidth="1.600"><path d="M1 7.700 7 1.700l6 6" /></svg>
        <svg className="ml-[23px]" width="21" height="21" viewBox="0 0 21 21" fill="none" stroke="#222" strokeWidth="1.300">
          <path d="M1.200 9.500A8.700 8.700 0 0 1 17.500 5.500M18.800 1v5h-5M1.500 20v-5h5M2.500 15.200A8.700 8.700 0 0 0 10 20" />
          <circle cx="15.300" cy="15.500" r="5.200" fill="#0b78d8" stroke="none" />
        </svg>
        <svg className="ml-[19px]" width="22" height="20" viewBox="0 0 22 20">
          <path d="M5.500 14.500A4.800 4.800 0 0 1 4.500 5 6 6 0 0 1 15 4.500a4.800 4.800 0 0 1 4.500 6L14 14.500z" fill="#c5c5c5" stroke="#555" strokeWidth="1.200" />
          <circle cx="15.500" cy="13.500" r="5.800" fill="#0b78d8" />
          <path d="M15.500 12.500v4M15.500 10v1.400" stroke="#fff" strokeWidth="1.500" />
        </svg>
        <svg className="ml-[18px]" width="22" height="22" viewBox="0 0 22 22">
          <path d="M10 1q4 3 9 3v6c0 5-4 8.500-9 10.500C5 18.500 1 15 1 10V4q5 0 9-3z" fill="#33b7ea" />
          <path d="M10 1q4 3 9 3v6h-9zM10 10v10.500C5 18.500 1 15 1 10z" fill="#0b63ae" />
          <path d="M15.500 9 21.500 21h-12z" fill="#fdc216" />
          <path d="M15.500 13v4M15.500 18v1.300" stroke="#222" strokeWidth="1.300" />
        </svg>
        <svg className="ml-[20px]" width="16" height="20" viewBox="0 0 16 20" fill="none">
          <rect width="16" height="20" rx="7" fill="#0a84ff" />
          <path d="M4.500 6.500 11 13l-3 3V4l3 3-6.500 6.500" stroke="#fff" strokeWidth="1.200" />
        </svg>
        <div className="mb-[2px] ml-[25px] w-[30px] text-center leading-[20px] tracking-[-0.3px]">ENG<br />IN</div>
        <svg className="ml-[21px]" width="21" height="16" viewBox="0 0 21 16" fill="none" stroke="#222" strokeWidth="1.300">
          <path d="M1 5.800a13.200 13.200 0 0 1 19 0M3.800 8.600a9.300 9.300 0 0 1 13.400 0M6.600 11.400a5.500 5.500 0 0 1 7.800 0" />
          <circle cx="10.500" cy="13.700" r="1.800" fill="#222" stroke="none" />
        </svg>
        <svg className="ml-[9px]" width="21" height="17" viewBox="0 0 21 17" fill="none" stroke="#222" strokeWidth="1.200" strokeLinejoin="round">
          <path d="M1 6v5h3l4.500 4V2L4 6zM11.500 6a4 4 0 0 1 0 5M14 3.800a7 7 0 0 1 0 9.400M16.700 1.500a10.500 10.500 0 0 1 0 14" />
        </svg>
        <svg className="-mt-1 ml-[9px]" width="21" height="18" viewBox="0 0 21 18" fill="none" stroke="#222" strokeWidth="1.400">
          <path d="M10 6h6.500a2 2 0 0 1 2 2v5.500a2 2 0 0 1-2 2H4a2 2 0 0 1-2-2M19.500 9v3.500" />
          <path d="M8.500 1C5 2 1 3.500 1 7.500 1 10 2.500 11.500 4.500 11.500 9 11.500 9.500 5 8.500 1zM2 13.500 6 6.500" fill="#222" stroke="#222" strokeWidth=".8" />
        </svg>
        <div className="mb-[2px] ml-[18px] w-[78px] whitespace-nowrap text-right leading-[20px] tracking-[0.05px]">02:14<br />18-10-2025</div>
      </div>
    </footer>
  );
}

export default function App() {
  return (
    <div className="flex h-[1029px] w-[1919px] flex-col overflow-hidden bg-white font-[Inter,sans-serif]">
      <BrowserBar />
      <div className="flex min-h-0 flex-1">
        <LeftPanel />
        <Canvas />
        <RightPanel />
      </div>
      <Taskbar />
    </div>
  );
}
